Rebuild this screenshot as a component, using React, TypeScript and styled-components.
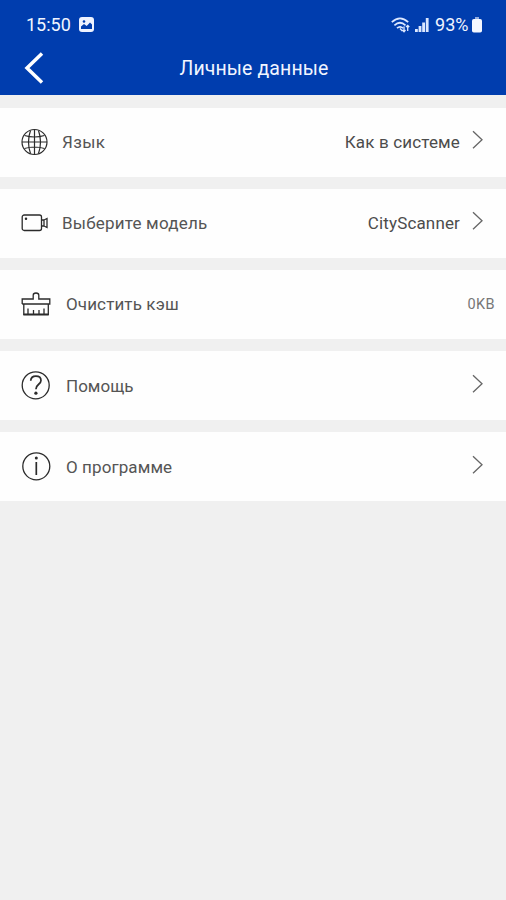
import React from "react";
import styled, { createGlobalStyle } from "styled-components";

const GlobalStyle = createGlobalStyle`
  body { margin: 0; background: #f0f0f0; font-family: Roboto, "Noto Sans", sans-serif; }
`;

const Screen = styled.main`
  width: 506px;
  height: 900px;
  overflow: hidden;
  background: #f0f0f0;
`;

const Header = styled.header`
  height: 95px;
  background: #003dae;
  color: #f1f5ff;
`;

const StatusBar = styled.div`
  display: flex;
  align-items: center;
  justify-content: space-between;
  height: 49px;
  padding: 0 24px 0 26px;
`;

const StatusGroup = styled.div`
  display: flex;
  align-items: center;
`;

const StatusText = styled.span<{ $left?: number }>`
  margin-left: ${(p) => p.$left ?? 0}px;
  font-size: 18px;
  line-height: 24px;
`;

const Glyph = styled.svg<{ $left?: number }>`
  display: block;
  flex: none;
  overflow: visible;
  margin-left: ${(p) => p.$left ?? 0}px;
`;

const TitleBar = styled.div`
  display: grid;
  grid-template-columns: 60px 1fr 60px;
  align-items: center;
  height: 38px;
`;

const BackButton = styled.button`
  display: flex;
  padding: 0 0 0 24px;
  border: 0;
  background: none;
  color: #fff;
`;

const Title = styled.h1`
  margin: 0;
  padding-left: 2px;
  padding-top: 1px;
  text-align: center;
  font-size: 19.5px;
  line-height: 24px;
  font-weight: 400;
  letter-spacing: 0.1px;
`;

const List = styled.div`
  display: flex;
  flex-direction: column;
  gap: 12.2px;
  padding-top: 12.5px;
`;

const Row = styled.div<{ $end: number }>`
  display: flex;
  align-items: center;
  box-sizing: border-box;
  height: 69px;
  padding: 0 ${(p) => p.$end}px 0 21px;
  background: #fefefe;
  color: #555;
`;

const IconSlot = styled.div<{ $width: number }>`
  flex: none;
  width: ${(p) => p.$width}px;
  color: #2b2b2b;
`;

const Label = styled.span<{ $tracking: number }>`
  flex: 1;
  font-size: 17px;
  line-height: 24px;
  letter-spacing: ${(p) => p.$tracking}px;
`;

const Value = styled.span<{ $small?: boolean; $tracking: number }>`
  padding-top: ${(p) => (p.$small ? 1 : 0)}px;
  color: ${(p) => (p.$small ? "#777" : "#4c4c4c")};
  font-size: ${(p) => (p.$small ? 14.5 : 17)}px;
  line-height: 24px;
  letter-spacing: ${(p) => p.$tracking}px;
`;

const Chevron = () => (
  <Glyph $left={12} width="11" height="22" viewBox="0 0 11 22" fill="none" stroke="#666" strokeWidth="1.3">
    <path d="M1 .2 10 8.700 1 17.200" />
  </Glyph>
);

const GlobeIcon = () => (
  <Glyph width="27" height="27" viewBox="0 0 27 27" fill="none" stroke="currentColor" strokeWidth="1.2">
    <circle cx="13.5" cy="13" r="12.5" />
    <path d="M9.500 1.500Q5.500 13 9.500 24.500M17.500 1.500Q21.500 13 17.500 24.500" />
    <path d="M13.5.5v25M1 13h25M3.500 6.500q10 3 20 0M3.500 19.500q10-3 20 0" />
  </Glyph>
);

const CameraIcon = () => (
  <Glyph width="28" height="18" viewBox="0 0 28 18" fill="none" stroke="currentColor" strokeWidth="1.3">
    <rect x="1.200" y="1" width="19.300" height="15.500" rx="2" />
    <path d="M20.500 6h2.500v6h-2.500M23 6l3-1.500v9L23 12" />
    <circle cx="5" cy="4.800" r=".6" fill="currentColor" />
  </Glyph>
);

const BrushIcon = () => (
  <Glyph width="30" height="24" viewBox="0 0 30 24" fill="none" stroke="currentColor" strokeWidth="1.3">
    <path d="M1.200 12V7h11V3.200q0-2.200 2.800-2.200t2.800 2.200V7h11v5H1.200M2.800 12V22.500h24.500V12M7 22v-5.500M12.500 22v-4M18 22v-4M23 22v-5.500" />
    <path d="M2.500 22.500h25" strokeWidth="1.700" />
  </Glyph>
);

const HelpIcon = () => (
  <Glyph width="30" height="30" viewBox="0 0 30 30" fill="none" stroke="currentColor" strokeWidth="1.3">
    <circle cx="14.700" cy="14.300" r="13.500" />
    <path d="M9.700 9.800q.3-4.600 5.200-4.600 5.100 0 5.100 4.300c0 3.900-5.100 3.700-5.100 8.700" strokeWidth="1.700" />
    <circle cx="14.900" cy="22.200" r="1.600" fill="currentColor" stroke="none" />
  </Glyph>
);

const InfoIcon = () => (
  <Glyph width="30" height="30" viewBox="0 0 30 30" fill="none" stroke="currentColor" strokeWidth="1.3">
    <circle cx="15.300" cy="14.300" r="13.500" />
    <path d="M15.300 10v13" strokeWidth="1.700" />
    <circle cx="15.300" cy="6" r="1.500" fill="currentColor" stroke="none" />
  </Glyph>
);

const PictureIcon = () => (
  <Glyph $left={8} width="15" height="15" viewBox="0 0 15 15">
    <rect width="15" height="15" rx="3" fill="#edf2ff" />
    <circle cx="5" cy="4.500" r="1.300" fill="#003dae" />
    <path d="M2 12V9.500l3-2.500 2.700 2L11 5.500l2 2V12z" fill="#003dae" />
  </Glyph>
);

const WifiIcon = () => (
  <Glyph width="19" height="16" viewBox="0 0 19 16" fill="none" stroke="#dbe7ff" strokeWidth="1.700">
    <path d="M.8 5.200Q9-2.500 17.200 5.200M3.400 8.300Q9 3.200 14.500 8.300M6 11.200q3-2.800 6 0" />
    <path d="m9 11.500 2.300 2.500M13 9.500v5M11.300 13l1.700 1.700 1.500-1.700M16.700 14V8.500M15 10l1.700-1.500L18.300 10" strokeWidth="1.300" />
  </Glyph>
);

const SignalIcon = () => (
  <Glyph $left={4.5} width="14" height="16" viewBox="0 0 14 16" fill="#dbe7ff">
    <path d="M0 12h2.800v3H0zM3.600 9h2.800v6H3.600zM7.200 5.500H10V15H7.200zM10.800 1h2.800v14h-2.800z" />
  </Glyph>
);

const BatteryIcon = () => (
  <Glyph $left={3.5} width="10" height="16" viewBox="0 0 10 16" fill="#f4f7ff">
    <path d="M3 0h4v2H3z" opacity=".6" />
    <rect y="2" width="10" height="13.500" rx="1.800" />
  </Glyph>
);

interface Item {
  icon: React.ReactNode;
  slot: number;
  label: string;
  tracking: number;
  value?: string;
  valueTracking?: number;
  plain?: boolean;
}

const items: Item[] = [
  { icon: <GlobeIcon />, slot: 41, label: "Язык", tracking: 0.4, value: "Как в системе", valueTracking: 0.15 },
  { icon: <CameraIcon />, slot: 41, label: "Выберите модель", tracking: 0.2, value: "CityScanner", valueTracking: 0.15 },
  { icon: <BrushIcon />, slot: 45, label: "Очистить кэш", tracking: 0.12, value: "0KB", valueTracking: 0.4, plain: true },
  { icon: <HelpIcon />, slot: 45, label: "Помощь", tracking: 0 },
  { icon: <InfoIcon />, slot: 45, label: "О программе", tracking: 0.1 },
];

export default function App() {
  return (
    <Screen>
      <GlobalStyle />
      <Header>
        <StatusBar>
          <StatusGroup>
            <StatusText>15:50</StatusText>
            <PictureIcon />
          </StatusGroup>
          <StatusGroup>
            <WifiIcon />
            <SignalIcon />
            <StatusText $left={6.5}>93%</StatusText>
            <BatteryIcon />
          </StatusGroup>
        </StatusBar>
        <TitleBar>
          <BackButton aria-label="Назад">
            <Glyph width="20" height="32" viewBox="0 0 20 32" fill="none" stroke="currentColor" strokeWidth="3.500">
              <path d="M18 1.500 3 16 18 30.500" />
            </Glyph>
          </BackButton>
          <Title>Личные данные</Title>
        </TitleBar>
      </Header>
      <List>
        {items.map((item) => (
          <Row key={item.label} $end={item.plain ? 11 : 23}>
            <IconSlot $width={item.slot}>{item.icon}</IconSlot>
            <Label $tracking={item.tracking}>{item.label}</Label>
            {item.value && (
              <Value $small={item.plain} $tracking={item.valueTracking ?? 0}>
                {item.value}
              </Value>
            )}
            {!item.plain && <Chevron />}
          </Row>
        ))}
      </List>
    </Screen>
  );
}
